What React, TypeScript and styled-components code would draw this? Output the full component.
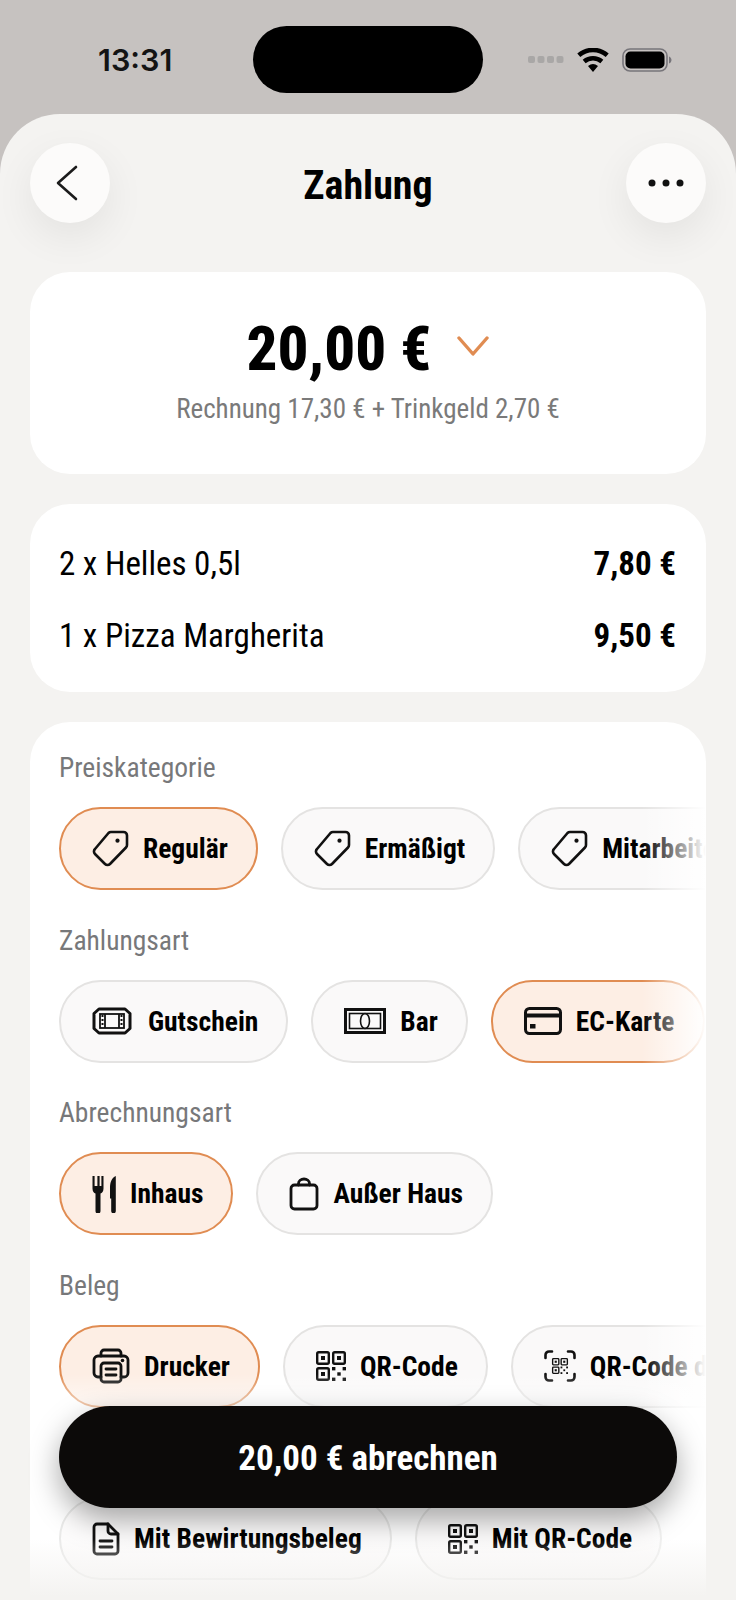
import React from "react";
import styled, { createGlobalStyle } from "styled-components";

const GlobalStyle = createGlobalStyle`
	html, body {
		margin: 0;
		padding: 0;
		background: #c6c2c0;
	}
	* {
		box-sizing: border-box;
	}
`;

const FONT = `"Roboto", "Liberation Sans", sans-serif`;

const Page = styled.div`
	position: relative;
	width: 736px;
	height: 1600px;
	overflow: hidden;
	background: #c6c2c0;
	font-family: ${FONT};
	font-stretch: 80%;
	color: #000;
`;

const StatusBar = styled.div`
	position: relative;
	height: 114px;
	display: flex;
	align-items: center;
	justify-content: space-between;
	padding: 5px 64px 0 98px;
`;

const Time = styled.div`
	font-family: "Inter", sans-serif;
	font-stretch: 100%;
	font-size: 30.5px;
	font-weight: 600;
	color: #141414;
`;

const Island = styled.div`
	position: absolute;
	left: 253px;
	top: 26px;
	width: 230px;
	height: 67px;
	border-radius: 34px;
	background: #000;
`;

const StatusIcons = styled.div`
	display: flex;
	align-items: center;
	gap: 13px;
`;

const Sheet = styled.div`
	height: 1486px;
	border-radius: 60px 60px 0 0;
	background: #f4f3f1;
	padding: 29px 30px 0;
	display: flex;
	flex-direction: column;
`;

const Header = styled.div`
	display: flex;
	flex-shrink: 0;
	align-items: center;
	justify-content: space-between;
	margin-bottom: 49px;
`;

const RoundButton = styled.div`
	width: 80px;
	height: 80px;
	border-radius: 50%;
	background: #fcfbfa;
	display: flex;
	align-items: center;
	justify-content: center;
	box-shadow: 0 14px 40px rgba(0, 0, 0, 0.07);
`;

const BackArrow = styled.svg`
	display: block;
	margin-right: 6px;
`;

const Title = styled.div`
	font-size: 40px;
	font-weight: 700;
	padding-top: 5px;
`;

const Card = styled.div`
	flex-shrink: 0;
	background: #fff;
	border-radius: 40px;
	margin-bottom: 30px;
`;

const AmountCard = styled(Card)`
	height: 202px;
	display: flex;
	flex-direction: column;
	align-items: center;
	padding-top: 44px;
`;

const AmountRow = styled.div`
	display: flex;
	align-items: center;
	gap: 26px;
	height: 66px;
`;

const Amount = styled.div`
	font-size: 61px;
	font-weight: 800;
`;

const AmountChevron = styled.svg`
	display: block;
	margin-bottom: 7px;
`;

const AmountNote = styled.div`
	margin-top: 11px;
	font-size: 27px;
	color: #7a7a7a;
`;

const ItemsCard = styled(Card)`
	height: 188px;
	padding: 35px 30px 0 29px;
	display: flex;
	flex-direction: column;
	gap: 24px;
`;

const ItemRow = styled.div`
	display: flex;
	justify-content: space-between;
	align-items: center;
	height: 48px;
	font-size: 33px;
`;

const ItemPrice = styled.span`
	font-weight: 700;
`;

const OptionsCard = styled(Card)`
	flex: 1 0 auto;
	margin-bottom: 0;
	padding: 30px 0 0 29px;
	border-radius: 40px 40px 0 0;
`;

const Section = styled.div`
	margin-bottom: 34.6px;
`;

const SectionLabel = styled.div`
	height: 32px;
	line-height: 32px;
	font-size: 27.5px;
	color: #77787a;
	margin-bottom: 23px;
`;

const ChipRow = styled.div`
	position: relative;
	display: flex;
	gap: 23px;
	overflow: hidden;
	&::after {
		content: "";
		position: absolute;
		top: 0;
		right: 0;
		bottom: 0;
		width: 64px;
		background: linear-gradient(to right, rgba(255, 255, 255, 0), #fff);
	}
`;

const Chip = styled.div<{ $active?: boolean; $faint?: boolean }>`
	flex-shrink: 0;
	height: 83px;
	padding: 0 28px 0 31px;
	display: flex;
	align-items: center;
	gap: 14px;
	border-radius: 42px;
	border: 2px solid ${p => (p.$active ? "#e08c52" : p.$faint ? "#eaeae9" : "#e4e3e2")};
	background: ${p => (p.$active ? "#fdeee4" : p.$faint ? "#fdfcfc" : "#faf9f9")};
	font-size: 27.5px;
	font-weight: 750;
	white-space: nowrap;
`;

const BottomFade = styled.div`
	position: absolute;
	left: 30px;
	right: 30px;
	bottom: 0;
	height: 226px;
	pointer-events: none;
	background: linear-gradient(
		to bottom,
		rgba(255, 255, 255, 0) 0,
		rgba(255, 255, 255, 0.5) 26px,
		rgba(255, 255, 255, 0) 110px,
		rgba(244, 243, 241, 0) 165px,
		#f4f3f1 222px
	);
`;

const PayButton = styled.div`
	position: absolute;
	left: 59px;
	top: 1406px;
	width: 618px;
	height: 102px;
	padding-top: 3px;
	border-radius: 51px;
	background: #0c0a09;
	color: #fff;
	display: flex;
	align-items: center;
	justify-content: center;
	font-size: 35px;
	font-weight: 700;
	box-shadow: 0 12px 30px rgba(0, 0, 0, 0.35);
`;

const Svg = styled.svg`
	display: block;
	flex-shrink: 0;
`;

const line = { fill: "none", stroke: "#111", strokeWidth: 2.6, strokeLinecap: "round", strokeLinejoin: "round" } as const;

const TagIcon = () => (
	<Svg width="37" height="37" viewBox="0 0 37 37">
		<path {...line} d="M19 2h12.500a3.500 3.500 0 0 1 3.500 3.500v9.500a3.500 3.500 0 0 1-1 2.500L18 34a3.500 3.500 0 0 1-5 0L3 24a3.500 3.500 0 0 1 0-5L16.500 3a3.500 3.500 0 0 1 2.500-1z" />
		<circle cx="25.500" cy="10.700" r="2.100" fill="#111" />
	</Svg>
);

const TicketIcon = () => (
	<Svg width="42" height="28" viewBox="0 0 42 28">
		<path {...line} strokeWidth="3" d="M7 2h26l5 4.500v15L33 26H7l-5-4.500v-15z" />
		<rect x="8" y="7" width="24" height="14" fill="none" stroke="#111" strokeWidth="1.800" />
		<path d="M13 7v14M27 7v14" fill="none" stroke="#111" strokeWidth="1.800" />
		<path d="M10.500 8v12M29.500 8v12" fill="none" stroke="#111" strokeWidth="2" strokeDasharray="2 2" />
	</Svg>
);

const BillIcon = () => (
	<Svg width="42" height="26" viewBox="0 0 42 26">
		<rect x="1.500" y="1.500" width="39" height="23" fill="none" stroke="#111" strokeWidth="3" />
		<rect x="5.500" y="5.500" width="31" height="15" fill="none" stroke="#111" strokeWidth="1.600" />
		<ellipse cx="21" cy="13" rx="4.500" ry="7.500" fill="none" stroke="#111" strokeWidth="1.600" />
	</Svg>
);

const CardIcon = () => (
	<Svg width="38" height="28" viewBox="0 0 38 28">
		<rect {...line} strokeWidth="3" x="1.500" y="1.500" width="35" height="25" rx="4" />
		<path d="M1.500 6.500h35v4h-35z" fill="#111" />
		<rect x="6" y="17" width="5.500" height="4.500" fill="#111" />
	</Svg>
);

const CutleryIcon = () => (
	<Svg width="24" height="38" viewBox="0 0 24 38">
		<path d="M.5 1v12.500c0 3 1.500 4.500 3 5V36a2.500 2.500 0 0 0 5 0V18.500c1.500-.5 3-2 3-5V1H9.400v10H7.600V1H5.400v10H2.600V1z" fill="#111" />
		<path d="M23.800 1c-4 1.800-5.800 6-5.800 12v10.500h1.200V36a2.300 2.300 0 0 0 4.600 0z" fill="#111" />
	</Svg>
);

const BagIcon = () => (
	<Svg width="30" height="34" viewBox="0 0 30 34">
		<rect {...line} strokeWidth="2.800" x="2" y="8" width="26" height="24" rx="3.500" />
		<path {...line} strokeWidth="2.800" d="M9.500 8V6.500a5.500 4.500 0 0 1 11 0V8" />
	</Svg>
);

const PrinterIcon = () => (
	<Svg width="38" height="36" viewBox="0 0 38 36">
		<path {...line} strokeWidth="2.800" d="M9 8V5a3 3 0 0 1 3-3h14a3 3 0 0 1 3 3v3" />
		<path {...line} strokeWidth="2.800" d="M9 29H6a4 4 0 0 1-4-4V12a4 4 0 0 1 4-4h26a4 4 0 0 1 4 4v13a4 4 0 0 1-4 4h-3" />
		<rect {...line} strokeWidth="2.800" x="9" y="15" width="20" height="19" rx="3" />
		<path {...line} strokeWidth="2.800" d="M14 21h10M14 27h10" />
		<circle cx="30.500" cy="12.500" r="1.800" fill="#111" />
	</Svg>
);

const QrGlyph = ({ sw = 2.4 }: { sw?: number }) => (
	<>
		<rect x="1.200" y="1.200" width="11.600" height="11.600" rx="1.500" fill="none" stroke="#111" strokeWidth={sw} />
		<rect x="17.200" y="1.200" width="11.600" height="11.600" rx="1.500" fill="none" stroke="#111" strokeWidth={sw} />
		<rect x="1.200" y="17.200" width="11.600" height="11.600" rx="1.500" fill="none" stroke="#111" strokeWidth={sw} />
		<rect x="5" y="5" width="4" height="4" fill="#111" />
		<rect x="21" y="5" width="4" height="4" fill="#111" />
		<rect x="5" y="21" width="4" height="4" fill="#111" />
		<rect x="16" y="16" width="3.400" height="3.400" fill="#111" />
		<rect x="26.600" y="16" width="3.400" height="3.400" fill="#111" />
		<rect x="21.300" y="21.300" width="3.400" height="3.400" fill="#111" />
		<rect x="16" y="26.600" width="3.400" height="3.400" fill="#111" />
		<rect x="26.600" y="26.600" width="3.400" height="3.400" fill="#111" />
	</>
);

const QrIcon = () => (
	<Svg width="30" height="30" viewBox="0 0 30 30">
		<QrGlyph />
	</Svg>
);

const ScanIcon = () => (
	<Svg width="32" height="32" viewBox="0 0 32 32">
		<path {...line} d="M8 1.500H5A3.500 3.500 0 0 0 1.500 5v3M24 1.500h3A3.500 3.500 0 0 1 30.500 5v3M8 30.500H5A3.500 3.500 0 0 1 1.500 27v-3M24 30.500h3a3.500 3.500 0 0 0 3.500-3.500v-3" />
		<g transform="translate(8 8) scale(.533)">
			<QrGlyph sw={2.6} />
		</g>
	</Svg>
);

const DocIcon = () => (
	<Svg width="28" height="34" viewBox="0 0 28 34">
		<path {...line} strokeWidth="2.800" d="M16 2H5a3 3 0 0 0-3 3v24a3 3 0 0 0 3 3h18a3 3 0 0 0 3-3V12z" />
		<path {...line} strokeWidth="2.800" d="M16 2v7a3 3 0 0 0 3 3h7M8 19h12M8 25h12" />
	</Svg>
);

const groups = [
	{
		label: "Preiskategorie",
		chips: [
			{ icon: <TagIcon />, text: "Regulär", active: true },
			{ icon: <TagIcon />, text: "Ermäßigt" },
			{ icon: <TagIcon />, text: "Mitarbeiter" },
		],
	},
	{
		label: "Zahlungsart",
		chips: [
			{ icon: <TicketIcon />, text: "Gutschein" },
			{ icon: <BillIcon />, text: "Bar" },
			{ icon: <CardIcon />, text: "EC-Karte", active: true },
		],
	},
	{
		label: "Abrechnungsart",
		chips: [
			{ icon: <CutleryIcon />, text: "Inhaus", active: true },
			{ icon: <BagIcon />, text: "Außer Haus" },
		],
	},
	{
		label: "Beleg",
		chips: [
			{ icon: <PrinterIcon />, text: "Drucker", active: true },
			{ icon: <QrIcon />, text: "QR-Code" },
			{ icon: <ScanIcon />, text: "QR-Code digital" },
		],
	},
	{
		label: "",
		chips: [
			{ icon: <DocIcon />, text: "Mit Bewirtungsbeleg", faint: true },
			{ icon: <QrIcon />, text: "Mit QR-Code", faint: true },
		],
	},
];

const App = () => (
	<Page>
		<GlobalStyle />
		<StatusBar>
			<Time>13:31</Time>
			<Island />
			<StatusIcons>
				<Svg width="36" height="7" viewBox="0 0 36 7">
					{[0, 9.5, 19, 28.5].map(x => (
						<rect key={x} x={x} y="0" width="7" height="7" rx="2" fill="#a9a7a6" />
					))}
				</Svg>
				<Svg width="32" height="24" viewBox="0 0 32 24">
					<path d="M16 24l-5-6a8 8 0 0 1 10 0zM8.600 15.200 5.700 11.800a16 16 0 0 1 20.600 0l-2.900 3.400a11.500 11.500 0 0 0-14.800 0zM3.300 9 .3 5.500a24 24 0 0 1 31.400 0L28.700 9a19.500 19.500 0 0 0-25.400 0z" fill="#000" />
				</Svg>
				<Svg width="50" height="24" viewBox="0 0 50 24">
					<rect x="1" y="1" width="44" height="22" rx="7" fill="none" stroke="#77757a" strokeWidth="1.600" />
					<rect x="3.500" y="3.500" width="39" height="17" rx="5" fill="#000" />
					<path d="M47 8.500c1.500.5 2.500 2 2.500 3.500s-1 3-2.500 3.500z" fill="#77757a" />
				</Svg>
			</StatusIcons>
		</StatusBar>
		<Sheet>
			<Header>
				<RoundButton>
					<BackArrow width="22" height="36" viewBox="0 0 22 36">
						<path d="M20 2 2 18l18 16" fill="none" stroke="#1b1b1b" strokeWidth="2.600" strokeLinecap="round" strokeLinejoin="round" />
					</BackArrow>
				</RoundButton>
				<Title>Zahlung</Title>
				<RoundButton>
					<Svg width="36" height="8" viewBox="0 0 36 8">
						<circle cx="4" cy="4" r="3.500" fill="#111" />
						<circle cx="18" cy="4" r="3.500" fill="#111" />
						<circle cx="32" cy="4" r="3.500" fill="#111" />
					</Svg>
				</RoundButton>
			</Header>
			<AmountCard>
				<AmountRow>
					<Amount>20,00 €</Amount>
					<AmountChevron width="32" height="20" viewBox="0 0 32 20">
						<path d="M2 2l14 16L30 2" fill="none" stroke="#e08c52" strokeWidth="3.400" strokeLinecap="round" strokeLinejoin="round" />
					</AmountChevron>
				</AmountRow>
				<AmountNote>Rechnung 17,30 € + Trinkgeld 2,70 €</AmountNote>
			</AmountCard>
			<ItemsCard>
				<ItemRow>
					<span>2 x Helles 0,5l</span>
					<ItemPrice>7,80 €</ItemPrice>
				</ItemRow>
				<ItemRow>
					<span>1 x Pizza Margherita</span>
					<ItemPrice>9,50 €</ItemPrice>
				</ItemRow>
			</ItemsCard>
			<OptionsCard>
				{groups.map(group => (
					<Section key={group.label}>
						<SectionLabel>{group.label}</SectionLabel>
						<ChipRow>
							{group.chips.map(chip => (
								<Chip key={chip.text} $active={chip.active} $faint={chip.faint}>
									{chip.icon}
									{chip.text}
								</Chip>
							))}
						</ChipRow>
					</Section>
				))}
			</OptionsCard>
		</Sheet>
		<BottomFade />
		<PayButton>20,00 € abrechnen</PayButton>
	</Page>
);

export default App;
